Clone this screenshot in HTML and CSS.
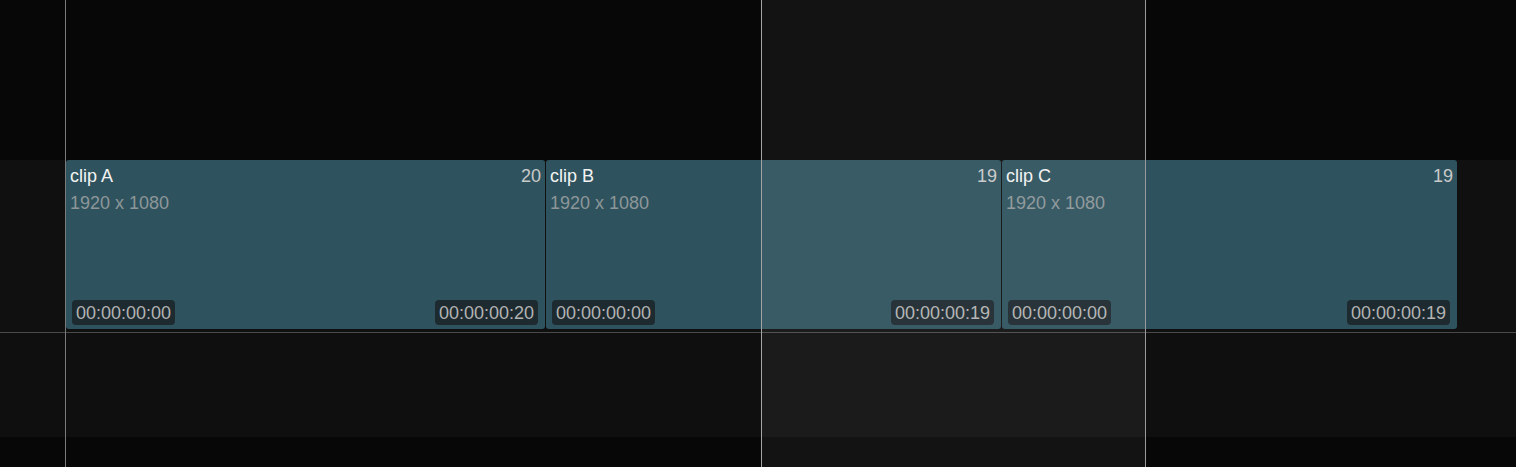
FILE: index.html
```html
<!DOCTYPE html>
<html>
<head>
<meta charset="utf-8">
<link rel="stylesheet" href="styles.css">
</head>
<body>
<div class="timeline">
  <div class="ruler"></div>
  <div class="track">
    <div class="clip clip-a">
      <div class="clip-head"><span class="clip-name">clip A</span><span class="clip-count">20</span></div>
      <div class="clip-size">1920 x 1080</div>
      <div class="clip-foot"><span class="tc">00:00:00:00</span><span class="tc">00:00:00:20</span></div>
    </div>
    <div class="clip clip-b">
      <div class="clip-head"><span class="clip-name">clip B</span><span class="clip-count">19</span></div>
      <div class="clip-size">1920 x 1080</div>
      <div class="clip-foot"><span class="tc">00:00:00:00</span><span class="tc">00:00:00:19</span></div>
    </div>
    <div class="clip clip-c">
      <div class="clip-head"><span class="clip-name">clip C</span><span class="clip-count">19</span></div>
      <div class="clip-size">1920 x 1080</div>
      <div class="clip-foot"><span class="tc">00:00:00:00</span><span class="tc">00:00:00:19</span></div>
    </div>
  </div>
  <div class="track-sep"></div>
  <div class="track2"></div>
  <div class="footer"></div>

  <div class="selection"></div>
  <div class="vline vline-start"></div>
  <div class="vline vline-in"></div>
  <div class="vline vline-out"></div>
</div>
</body>
</html>
```
FILE: styles.css
```css
* { box-sizing: border-box; }
html, body {
  margin: 0;
  padding: 0;
  background: #070707;
  font-family: "Liberation Sans", Arial, sans-serif;
  overflow: hidden;
}
.timeline {
  position: relative;
  width: 1516px;
  height: 467px;
  display: flex;
  flex-direction: column;
}
.ruler {
  height: 160px;
  background: #070707;
}
.track {
  height: 172px;
  background: #101010;
  padding-left: 66px;
  display: flex;
  gap: 1px;
  align-items: flex-start;
}
.clip {
  height: 169px;
  background: #2f535e;
  border-radius: 3px;
  display: flex;
  flex-direction: column;
  padding: 6px 4px 4px 4px;
}
.clip-a { width: 479px; }
.clip-b { width: 455px; }
.clip-c { width: 455px; }
.clip-head {
  display: flex;
  justify-content: space-between;
  font-size: 18px;
  line-height: 20px;
}
.clip-name { color: #f2f2f2; }
.clip-count { color: #c9c9c9; }
.clip-size {
  margin-top: 7px;
  font-size: 18px;
  line-height: 20px;
  color: #8d9699;
}
.clip-foot {
  margin-top: auto;
  display: flex;
  justify-content: space-between;
  padding: 0 3px 0 2px;
}
.tc {
  background: #1d2a2f;
  color: #b3b3b3;
  font-size: 18px;
  line-height: 25px;
  height: 25px;
  padding: 1px 4px 0 4px;
  border-radius: 4px;
  overflow: hidden;
}
.track-sep {
  height: 1px;
  background: #4a4a4a;
}
.track2 {
  height: 104px;
  background: #0f0f0f;
}
.footer {
  flex: 1;
  background: #070707;
}
.selection {
  position: absolute;
  left: 762px;
  top: 0;
  width: 383px;
  height: 467px;
  background: rgba(255, 255, 255, 0.052);
  pointer-events: none;
}
.vline {
  position: absolute;
  top: 0;
  width: 1px;
  height: 467px;
}
.vline-start { left: 65px; background: #7a7a7a; }
.vline-in { left: 761px; background: #a5a5a5; }
.vline-out { left: 1145px; background: #9a9a9a; }
```
